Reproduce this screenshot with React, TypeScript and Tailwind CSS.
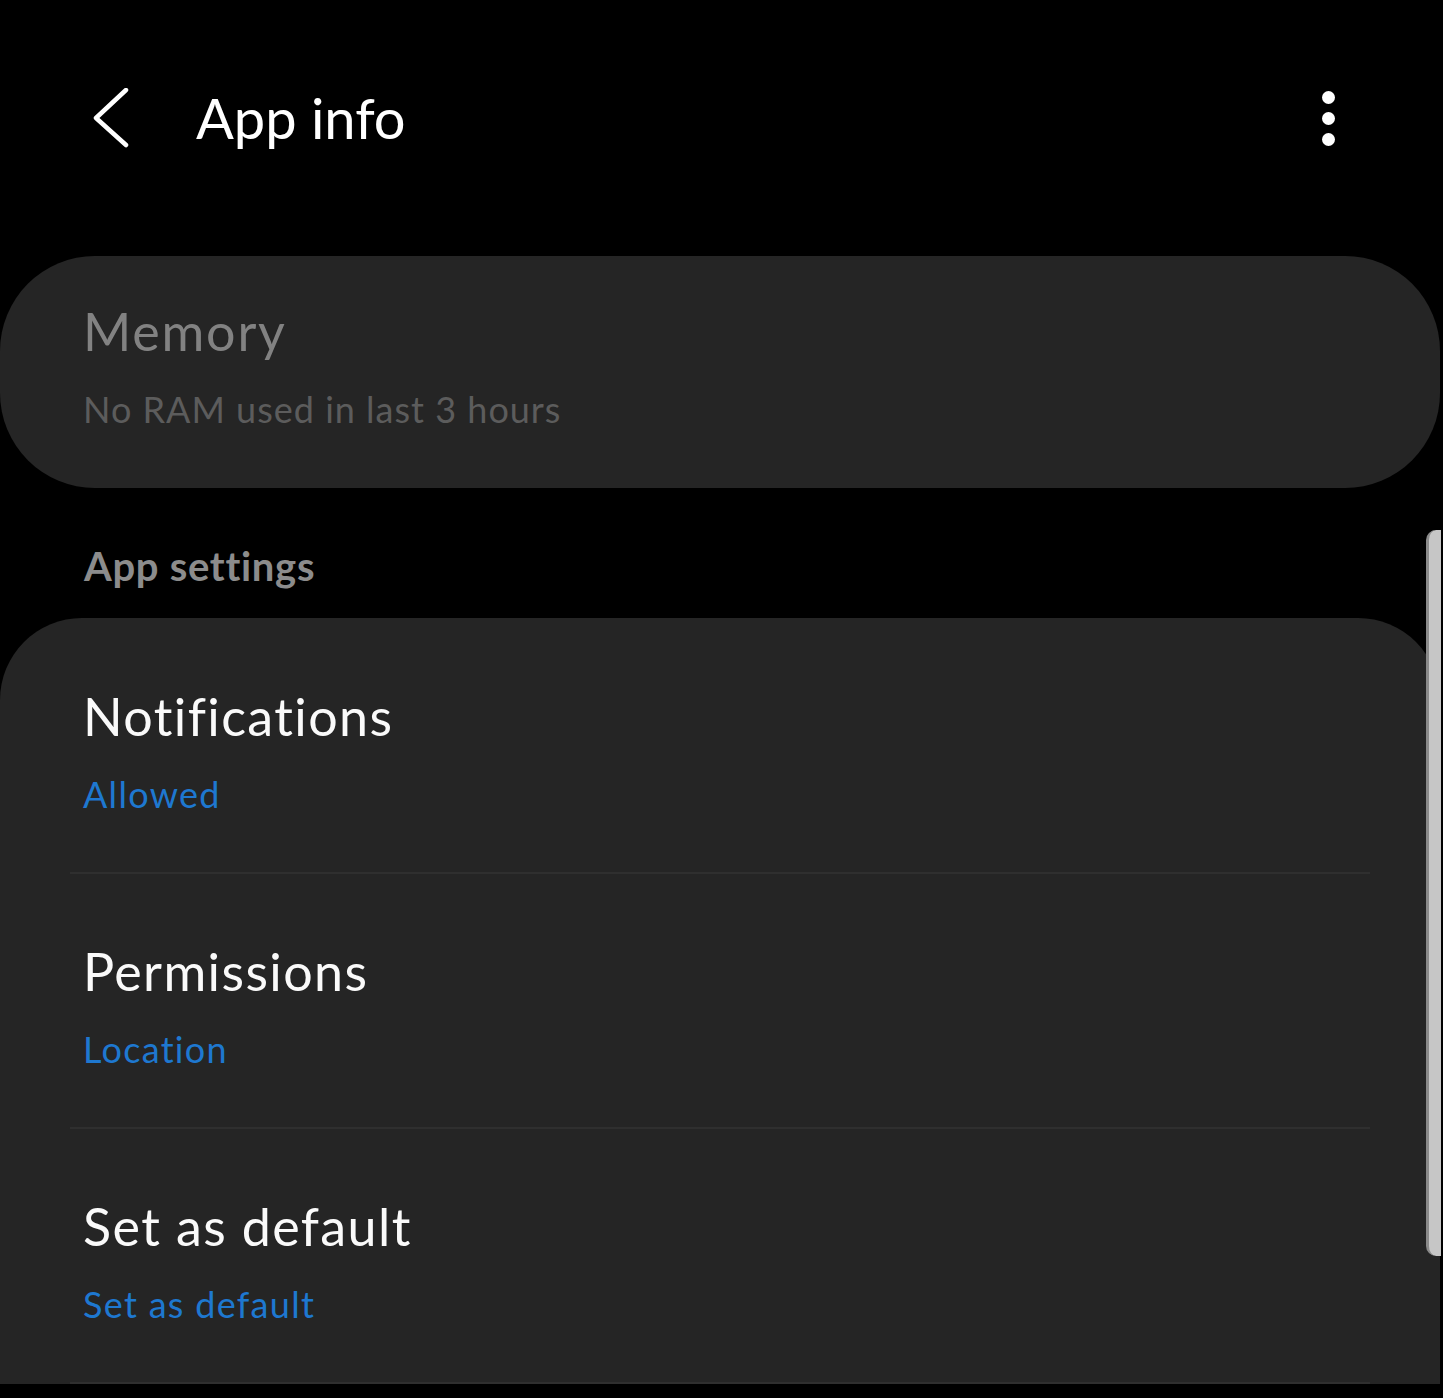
import React from "react";

const font = { fontFamily: "Lato, 'Noto Sans', sans-serif" };

interface RowProps {
  title: string;
  value: string;
}

function SettingRow({ title, value }: RowProps) {
  return (
    <div className="h-[255px] flex flex-col">
      <div className="pl-[83px] pt-[71px] flex-1">
        <div className="text-[52px] leading-[52px] tracking-[1.4px] text-[#fafafa]">{title}</div>
        <div className="mt-[34px] text-[36px] leading-[36px] tracking-[1.3px] text-[#1e78d0]">{value}</div>
      </div>
      <div className="mx-[70px] h-[2px] bg-[#2f2f2f]" />
    </div>
  );
}

export default function App() {
  const rows: RowProps[] = [
    { title: "Notifications", value: "Allowed" },
    { title: "Permissions", value: "Location" },
    { title: "Set as default", value: "Set as default" },
  ];

  return (
    <div className="relative w-[1443px] h-[1398px] overflow-hidden bg-black" style={font}>
      {/* top bar */}
      <div className="h-[236px] flex items-center">
        <div className="w-[196px] flex items-center pl-[92px]">
          <svg width="40" height="60" viewBox="0 0 40 60" fill="none">
            <polyline
              points="34,2 4,30 34,57"
              stroke="white"
              strokeWidth="4.5"
              strokeLinecap="round"
              strokeLinejoin="round"
            />
          </svg>
        </div>
        <div className="flex-1 text-[56px] leading-[56px] text-white">App info</div>
        <div className="w-[230px] flex flex-col items-center gap-[8px]">
          <span className="w-[13px] h-[13px] rounded-full bg-white" />
          <span className="w-[13px] h-[13px] rounded-full bg-white" />
          <span className="w-[13px] h-[13px] rounded-full bg-white" />
        </div>
      </div>

      <div className="mt-[20px] w-[1440px] h-[232px] rounded-[95px] bg-[#252525] pl-[83px] pt-[49px]">
        <div className="text-[52px] leading-[52px] tracking-[1.8px] text-[#828282]">Memory</div>
        <div className="mt-[34px] text-[36px] leading-[36px] tracking-[1px] text-[#5c5c5c]">
          No RAM used in last 3 hours
        </div>
      </div>

      <div className="pl-[84px] pt-[58px] h-[130px] text-[40px] leading-[40px] tracking-[0.7px] font-bold text-[#8c8c8c]">
        App settings
      </div>

      <div className="w-[1440px] rounded-t-[82px] bg-[#252525] pt-[1px]">
        {rows.map((r) => (
          <SettingRow key={r.title} title={r.title} value={r.value} />
        ))}
      </div>

      {/* scrollbar overlay */}
      <div className="absolute left-[1426px] top-[530px] w-[15px] h-[726px] rounded-l-[10px] bg-[#c6c6c6] border-l-[3px] border-[#8a8a8a]" />
    </div>
  );
}
